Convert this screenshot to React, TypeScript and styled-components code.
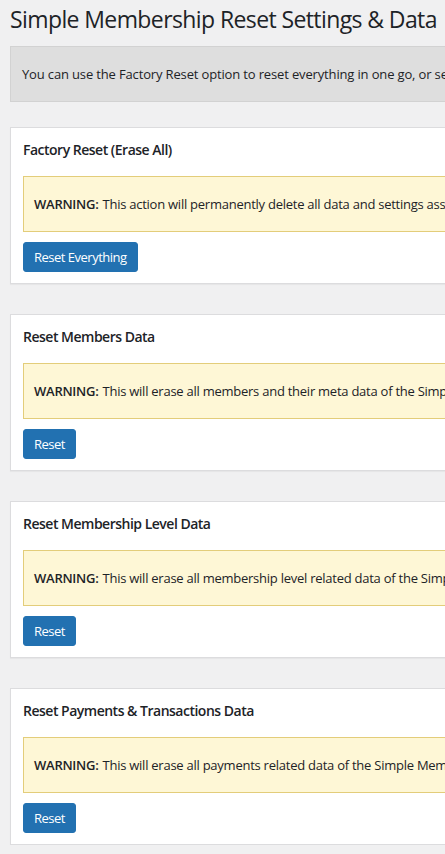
import * as React from "react";
import styled, { createGlobalStyle } from "styled-components";

const GlobalStyle = createGlobalStyle`
  html, body {
    margin: 0;
    padding: 0;
    background: #f0f0f1;
    overflow: hidden;
  }
  body {
    font-family: "Open Sans", "Noto Sans", "Liberation Sans", sans-serif;
    color: #1d2327;
    font-size: 13px;
  }
`;

const Wrap = styled.div`
  width: 1200px;
  padding: 0 0 0 10px;
  box-sizing: border-box;
`;

const Title = styled.h1`
  margin: 0;
  padding: 5px 0 0;
  font-size: 23px;
  font-weight: 400;
  line-height: 29px;
  letter-spacing: -0.6px;
`;

const Notice = styled.div`
  margin-top: 12px;
  background: #dedede;
  border: 1px solid #d2d2d2;
  height: 56px;
  box-sizing: border-box;
  padding: 0 11px;
  display: flex;
  align-items: center;
  letter-spacing: -0.15px;
  white-space: nowrap;
`;

const Cards = styled.div`
  display: flex;
  flex-direction: column;
  gap: 30px;
  margin-top: 25px;
`;

const Card = styled.section`
  background: #fff;
  border: 1px solid #dcdcde;
  box-shadow: 0 1px 1px rgba(0, 0, 0, 0.04);
  padding: 11px 12px 12px;
  height: 157px;
  box-sizing: border-box;
`;

const CardTitle = styled.h3`
  margin: 0 0 15px;
  font-size: 14px;
  font-weight: 600;
  line-height: 22px;
  letter-spacing: -0.5px;
`;

const Warning = styled.div`
  background: #fef7d6;
  border: 1px solid #e3cd7a;
  height: 56px;
  box-sizing: border-box;
  padding: 0 10px;
  display: flex;
  align-items: center;
  letter-spacing: -0.25px;
  white-space: nowrap;

  strong {
    font-weight: 600;
    margin-right: 4px;
  }
`;

const Button = styled.button`
  margin-top: 10px;
  height: 30px;
  padding: 0 10px;
  border: 1px solid #2271b1;
  border-radius: 3px;
  background: #2271b1;
  color: #fff;
  font-family: inherit;
  font-size: 13px;
  letter-spacing: -0.5px;
  line-height: 28px;
  cursor: pointer;
`;

const sections = [
  {
    title: "Factory Reset (Erase All)",
    text: "This action will permanently delete all data and settings associated with the Simple Membership plugin. This cannot be undone.",
    button: "Reset Everything",
  },
  {
    title: "Reset Members Data",
    text: "This will erase all members and their meta data of the Simple Membership plugin.",
    button: "Reset",
  },
  {
    title: "Reset Membership Level Data",
    text: "This will erase all membership level related data of the Simple Membership plugin.",
    button: "Reset",
  },
  {
    title: "Reset Payments & Transactions Data",
    text: "This will erase all payments related data of the Simple Membership plugin.",
    button: "Reset",
  },
];

export default function App() {
  return (
    <>
      <GlobalStyle />
      <Wrap>
        <Title>Simple Membership Reset Settings &amp; Data</Title>
        <Notice>
          You can use the Factory Reset option to reset everything in one go, or select individual options below to reset specific data.
        </Notice>
        <Cards>
          {sections.map((s) => (
            <Card key={s.title}>
              <CardTitle>{s.title}</CardTitle>
              <Warning>
                <strong>WARNING:</strong> {s.text}
              </Warning>
              <Button>{s.button}</Button>
            </Card>
          ))}
        </Cards>
      </Wrap>
    </>
  );
}
